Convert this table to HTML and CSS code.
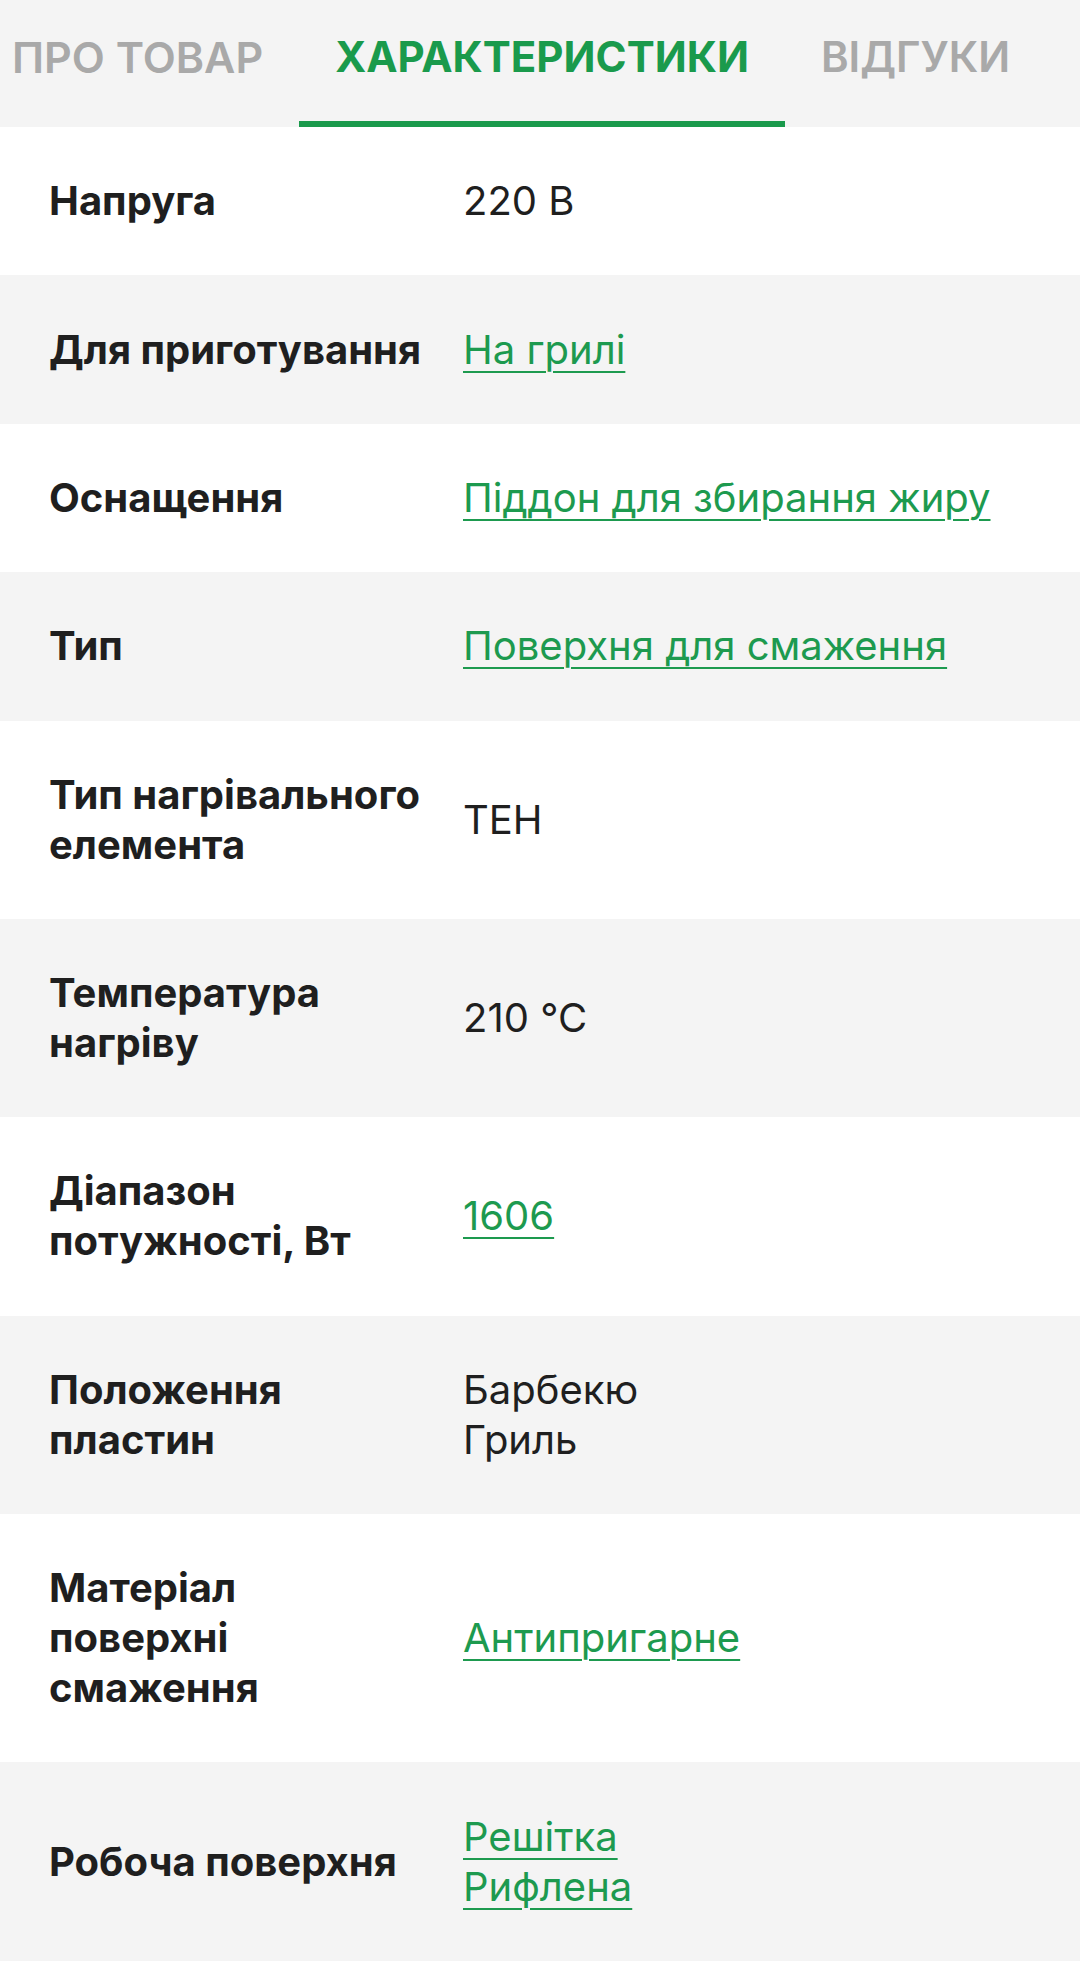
FILE: index.html
```html
<!DOCTYPE html>
<html lang="uk">
<head>
<meta charset="utf-8">
<title>Характеристики</title>
<link rel="stylesheet" href="styles.css">
</head>
<body>
<nav class="tabs">
  <a class="tab">ПРО ТОВАР</a>
  <a class="tab tab-active">ХАРАКТЕРИСТИКИ</a>
  <a class="tab">ВІДГУКИ</a>
</nav>
<section class="specs">
  <div class="row"><div class="label">Напруга</div><div class="value">220 В</div></div>
  <div class="row alt"><div class="label">Для приготування</div><div class="value"><a class="link">На грилі</a></div></div>
  <div class="row"><div class="label">Оснащення</div><div class="value"><a class="link">Піддон для збирання жиру</a></div></div>
  <div class="row alt"><div class="label">Тип</div><div class="value"><a class="link">Поверхня для смаження</a></div></div>
  <div class="row"><div class="label">Тип нагрівального елемента</div><div class="value">ТЕН</div></div>
  <div class="row alt"><div class="label">Температура нагріву</div><div class="value">210 °C</div></div>
  <div class="row"><div class="label">Діапазон потужності, Вт</div><div class="value"><a class="link">1606</a></div></div>
  <div class="row alt"><div class="label">Положення пластин</div><div class="value">Барбекю<br>Гриль</div></div>
  <div class="row"><div class="label">Матеріал поверхні смаження</div><div class="value"><a class="link">Антипригарне</a></div></div>
  <div class="row alt"><div class="label">Робоча поверхня</div><div class="value"><a class="link">Решітка</a><br><a class="link">Рифлена</a></div></div>
</section>
</body>
</html>
```
FILE: styles.css
```css
html, body {
  margin: 0;
  padding: 0;
  background: #ffffff;
}
body {
  font-family: Inter, "Noto Sans", sans-serif;
  color: #1f1f1f;
  width: 1080px;
  overflow: hidden;
}
.tabs {
  display: flex;
  background: #f4f4f4;
  height: 127px;
  box-sizing: border-box;
}
.tab {
  display: flex;
  align-items: center;
  justify-content: center;
  padding: 0 36px 14px;
  font-size: 43px;
  font-weight: 600;
  color: #a9a9a9;
  box-sizing: border-box;
  white-space: nowrap;
}
.tab:first-child {
  padding-left: 12px;
  padding-right: 36px;
}
.tab:last-child {
  font-size: 42px;
}
.tab-active {
  color: #1a9a4c;
  font-weight: 700;
  font-size: 42px;
  border-bottom: 6px solid #1a9a4c;
  padding-bottom: 8px;
}
.specs {
  display: flex;
  flex-direction: column;
}
.row {
  display: grid;
  grid-template-columns: 414px 1fr;
  align-items: center;
  padding: 49.2px 20px 49.2px 49px;
  font-size: 40px;
  line-height: 50px;
}
.alt {
  background: #f4f4f4;
}
.label {
  font-weight: 700;
  max-width: 374px;
}
.value {
  font-weight: 400;
}
.link {
  color: #1d9a4f;
  text-decoration: underline;
  text-decoration-thickness: 2px;
  text-underline-offset: 7px;
}
```
